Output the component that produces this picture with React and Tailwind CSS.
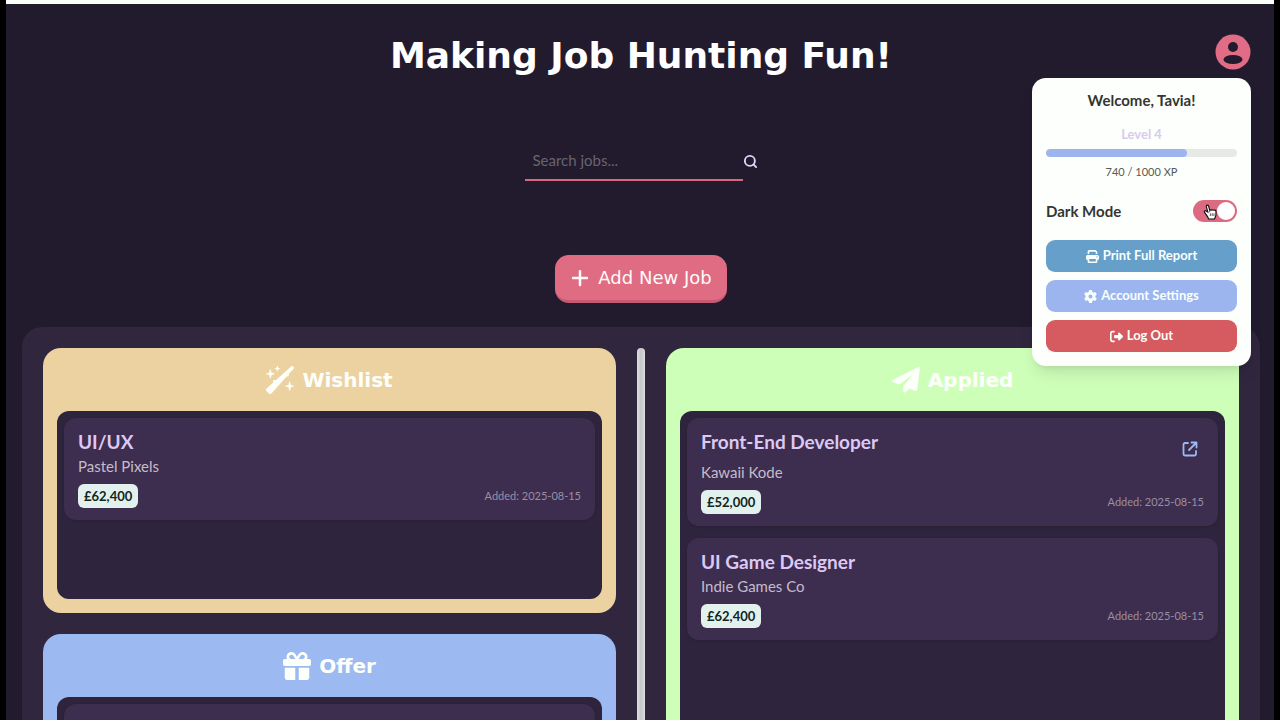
import { useState } from "react";
import {
  FaGear,
  FaGift,
  FaPlus,
  FaPrint,
  FaRightFromBracket,
  FaWandSparkles,
} from "react-icons/fa6";
import { FiSearch } from "react-icons/fi";

const wishlist = [
  { id: 1, title: "UI/UX", company: "Pastel Pixels", salary: "£62,400", added: "2025-08-15" },
];

const offers = [];

const applied = [
  {
    id: 2,
    title: "Front-End Developer",
    company: "Kawaii Kode",
    salary: "£52,000",
    added: "2025-08-15",
    link: "#front-end-developer",
  },
  { id: 3, title: "UI Game Designer", company: "Indie Games Co", salary: "£62,400", added: "2025-08-15" },
];

function PlaneIcon({ className }) {
  return (
    <svg viewBox="0 0 28 28" className={className} fill="currentColor">
      <path d="M26 1.2c1-.6 2 .1 1.800 1.200l-2.600 21.400c-.1 1-1 1.500-1.900 1.100l-6-2.500-3.600 3.700c-1 1-2.500.4-2.500-1v-4.600L21 8.200 7.600 18.600l-6.400-2.300c-1.300-.5-1.400-1.900-.2-2.600Z" />
    </svg>
  );
}

function OpenIcon() {
  return (
    <svg
      viewBox="0 0 16 16"
      className="h-4 w-4"
      fill="none"
      stroke="currentColor"
      strokeWidth="1.8"
      strokeLinecap="round"
      strokeLinejoin="round"
    >
      <path d="M6 2H3a1.500 1.500 0 0 0-1.500 1.500v9.500a1.500 1.500 0 0 0 1.500 1.500h9.500a1.500 1.500 0 0 0 1.500-1.500v-3" />
      <path d="M9.500 1.500h5v5M14 2 7 9" />
    </svg>
  );
}

function JobCard({ job }) {
  return (
    <article className="rounded-xl bg-[#3d2d4e] px-3.5 py-3 shadow-sm">
      <div className="flex items-start justify-between">
        <h3 className="text-[19px] leading-6 font-bold text-[#dcc8f4]">{job.title}</h3>
        {job.link && (
          <a href={job.link} aria-label={`Open ${job.title}`} className="px-1.5 pt-[11px] pb-[3px] text-[#9db8f2]">
            <OpenIcon />
          </a>
        )}
      </div>
      <p className="text-[15px] leading-6 text-[#c5bccb]">{job.company}</p>
      <div className="mt-1.5 flex items-center justify-between">
        <span className="rounded-md bg-[#e2f1ee] px-1.5 text-[13px] leading-6 font-bold text-[#10251c]">
          {job.salary}
        </span>
        <span className="text-[11px] text-[#9a8fa3]">Added: {job.added}</span>
      </div>
    </article>
  );
}

function Column({ title, icon: Icon, jobs, color, listHeight }) {
  return (
    <section className={`rounded-[18px] px-3.5 pb-3.5 ${color}`}>
      <h2 className="flex h-[63px] items-center justify-center gap-2 font-['DejaVu_Sans',sans-serif] text-xl font-bold text-[#fdfffa]">
        <Icon className="h-7 w-7" />
        {title}
      </h2>
      <div className={`flex flex-col gap-3 rounded-xl bg-[#2f243d] p-[7px] ${listHeight}`}>
        {jobs.map((job) => (
          <JobCard key={job.id} job={job} />
        ))}
        {/* Empty slot keeps the column shape when there are no jobs */}
        {jobs.length === 0 && <div className="h-[102px] rounded-xl bg-[#3d2d4e] shadow-sm" />}
      </div>
    </section>
  );
}

function HandCursor() {
  return (
    <svg viewBox="0 0 16 18" className="pointer-events-none absolute top-1 left-2.5 h-4 w-3.5">
      <path
        d="M5 1.2c-1 0-1.5.8-1.2 1.7L5.5 9 3.6 7.8c-1.4-.8-2.7.4-1.8 1.6l3.4 4.8 1.2 2.8h6.8l1.6-4.3V8c0-1.4-2-1.6-2.2-.4-.2-1.4-2.2-1.5-2.5-.2-.3-1.2-2-1.3-2.3-.1L6.3 2.1C6.1 1.5 5.6 1.2 5 1.2Z"
        fill="white"
        stroke="#111"
        strokeWidth="1.3"
      />
      <path d="M8.4 10.5v3M10.5 10.5v3M12.5 10.5v3" stroke="#111" strokeWidth=".8" />
    </svg>
  );
}

function ProfileMenu({ darkMode, setDarkMode }) {
  const xp = 740;
  const maxXp = 1000;
  const button =
    "flex h-8 w-full items-center justify-center gap-1 rounded-[9px] text-[13px] font-bold text-[#f8fffc]";

  return (
    <div className="absolute top-full right-0 z-10 mt-2 w-[219px] rounded-[14px] bg-[#fdfffc] px-3.5 pt-2.5 pb-3.5 text-center shadow-lg">
      <p className="text-[15px] leading-6 font-bold text-[#333633]">Welcome, Tavia!</p>
      <p className="mt-3 text-[13px] leading-5 font-bold text-[#d8ccec]">Level 4</p>
      <div className="mt-[5px] h-2 overflow-hidden rounded-full bg-[#e6e9e5]">
        <div
          className="h-full rounded-full bg-[#9db5ee]"
          style={{ width: `${(xp / maxXp) * 100}%` }}
        />
      </div>
      <p className="mt-[7px] text-[11px] leading-4 text-[#555a56]">
        {xp} / {maxXp} XP
      </p>
      <div className="mt-5 flex items-center justify-between">
        <label htmlFor="dark-mode" className="text-[15px] leading-5 font-bold text-[#333633]">
          Dark Mode
        </label>
        <span className="relative flex">
          <input
            id="dark-mode"
            type="checkbox"
            checked={darkMode}
            onChange={() => setDarkMode(!darkMode)}
            className="peer h-[22px] w-11 appearance-none rounded-full bg-gray-300 checked:bg-[#dc6b82]"
          />
          <span className="pointer-events-none absolute top-0.5 left-0.5 h-[18px] w-[18px] rounded-full bg-white peer-checked:right-0.5 peer-checked:left-auto" />
          <HandCursor />
        </span>
      </div>
      <div className="mt-[18px] flex flex-col gap-2">
        <button className={`${button} bg-[#659fca]`}>
          <FaPrint />
          Print Full Report
        </button>
        <button className={`${button} bg-[#9db5ee]`}>
          <FaGear />
          Account Settings
        </button>
        <button className={`${button} bg-[#d65b60]`}>
          <FaRightFromBracket />
          Log Out
        </button>
      </div>
    </div>
  );
}

export default function App() {
  const [darkMode, setDarkMode] = useState(true);
  const [search, setSearch] = useState("");

  return (
    <div className="h-screen overflow-hidden bg-black px-1.5 font-['Lato',sans-serif]">
      <div className="min-h-full border-t-4 border-[#fbfffa] bg-[#221b2e] pr-3.5 pl-4">
        <header className="relative flex h-[66px] justify-center pt-7">
          <h1 className="font-['DejaVu_Sans',sans-serif] text-4xl leading-[48px] font-bold text-white">
            Making Job Hunting Fun!
          </h1>
          <div className="absolute right-[9px] bottom-0">
            <button aria-label="Profile" className="ml-auto block text-[#e06c86]">
              <svg viewBox="0 0 36 36" className="h-9 w-9">
                <circle cx="18" cy="18" r="17.5" fill="currentColor" />
                <circle cx="18" cy="13" r="5" fill="#221b2e" />
                <ellipse cx="18" cy="25.5" rx="9.5" ry="4.5" fill="#221b2e" />
              </svg>
            </button>
            <ProfileMenu darkMode={darkMode} setDarkMode={setDarkMode} />
          </div>
        </header>

        <form className="mt-[71px] flex items-center justify-center" role="search">
          <input
            type="search"
            aria-label="Search jobs"
            placeholder="Search jobs..."
            value={search}
            onChange={(e) => setSearch(e.target.value)}
            className="h-10 w-[218px] border-b-2 border-[#d8667f] bg-transparent px-2 text-[15px] text-white outline-none placeholder:text-[#69646f]"
          />
          <button type="button" aria-label="Search" className="text-[#dcd8fa]">
            <FiSearch className="h-[15px] w-[15px]" strokeWidth={3} />
          </button>
        </form>

        <div className="mt-[74px] flex justify-center">
          <button className="flex h-12 w-[172px] items-center justify-center gap-2 rounded-[14px] border-b-3 border-[#c75a73] bg-[#e06c84] font-['DejaVu_Sans',sans-serif] text-lg text-[#fffaf8]">
            <FaPlus className="h-5 w-5" />
            Add New Job
          </button>
        </div>

        <main className="mt-6 flex gap-[21px] rounded-[20px] bg-[#30263e] p-[21px]">
          <div className="flex flex-1 flex-col gap-[21px]">
            <Column title="Wishlist" icon={FaWandSparkles} jobs={wishlist} color="bg-[#ecd2a0]" listHeight="min-h-[188px]" />
            <Column title="Offer" icon={FaGift} jobs={offers} color="bg-[#9db9f2]" listHeight="min-h-[188px]" />
          </div>
          <div className="w-2 rounded-full bg-linear-to-r from-[#e0dde5] via-[#c4c7c6] to-[#e0dde5]" />
          <div className="flex flex-1 flex-col">
            <Column title="Applied" icon={PlaneIcon} jobs={applied} color="bg-[#ceffb9]" listHeight="min-h-[474px]" />
          </div>
        </main>
      </div>
    </div>
  );
}
